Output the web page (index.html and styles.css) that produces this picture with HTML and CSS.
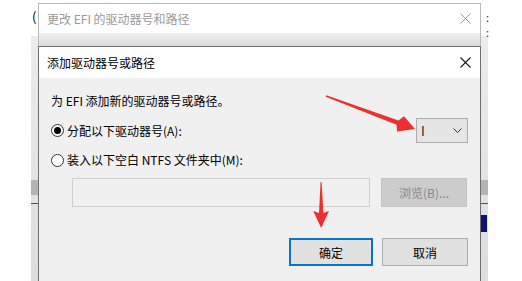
FILE: index.html
```html
<!DOCTYPE html>
<html lang="zh-CN">
<head>
    <meta charset="UTF-8">
    <title>添加驱动器号或路径</title>
    <link rel="stylesheet" href="styles.css">
</head>
<body>
    <div class="desk">
        <div class="backwin">
            <span class="shade"></span>
            <span class="rule"></span>
            <span class="navy"></span>
        </div>
        <span class="paren">(</span>
        <span class="dots dots-a">:</span>
        <span class="dots dots-b">:</span>

        <div class="dlg outer">
            <div class="titlebar">
                <span class="title">更改 EFI 的驱动器号和路径</span>
                <svg class="close" width="11" height="11" viewBox="0 0 11 11">
                    <path d="M0.5 0.5 L10.5 10.5 M10.5 0.5 L0.5 10.5" stroke="#9a9a9a" stroke-width="1" fill="none"/>
                </svg>
            </div>
            <div class="outer-body"></div>
        </div>

        <div class="dlg inner">
            <div class="titlebar">
                <span class="title">添加驱动器号或路径</span>
                <svg class="close" width="11" height="11" viewBox="0 0 11 11">
                    <path d="M0.5 0.5 L10.5 10.5 M10.5 0.5 L0.5 10.5" stroke="#1a1a1a" stroke-width="1.1" fill="none"/>
                </svg>
            </div>
            <div class="body">
                <p class="intro">为 EFI 添加新的驱动器号或路径。</p>

                <div class="row row-letter">
                    <label class="radio"><span class="dot checked"></span>分配以下驱动器号(A):</label>
                    <div class="combo">
                        <span>I</span>
                        <svg width="9" height="5" viewBox="0 0 9 5">
                            <path d="M0.5 0.5 L4.5 4.5 L8.5 0.5" stroke="#333" stroke-width="1" fill="none"/>
                        </svg>
                    </div>
                </div>

                <div class="row row-mount">
                    <label class="radio"><span class="dot"></span>装入以下空白 NTFS 文件夹中(M):</label>
                </div>

                <div class="row row-path">
                    <div class="pathbox"></div>
                    <button class="btn disabled" type="button">浏览(B)...</button>
                </div>

                <div class="row row-actions">
                    <button class="btn primary" type="button">确定</button>
                    <button class="btn" type="button">取消</button>
                </div>
            </div>
        </div>

        <svg class="marks" width="522" height="281" viewBox="0 0 522 281">
            <polygon fill="#ec2f2f" points="326.3,95.3 398.5,120.4 404,116.3 415,129 397,131.5 396.6,124.8 325.7,96.7"/>
            <polygon fill="#ec2f2f" points="320.6,182 321.6,182 323.4,213 329,211 321.2,228 313.2,211 319,213"/>
        </svg>
    </div>
</body>
</html>
```

FILE: styles.css
```css
* {
    box-sizing: border-box;
}
body {
    margin: 0;
    background: #fff;
    font-family: "Noto Sans CJK SC", "Noto Sans", sans-serif;
    font-size: 12px;
    color: #000;
}
.desk {
    position: relative;
    width: 522px;
    height: 281px;
    overflow: hidden;
    background: #fff;
}

/* window lying behind the dialogs */
.backwin {
    position: absolute;
    left: 31px;
    top: 36px;
    width: 457px;
    height: 260px;
    background: linear-gradient(#ececec, #dcdcdc);
}
.backwin .shade {
    position: absolute;
    left: 0;
    top: 144px;
    width: 100%;
    height: 15px;
    background: #b4b4b4;
}
.backwin .rule {
    position: absolute;
    left: 0;
    top: 167px;
    width: 100%;
    height: 1px;
    background: #555;
}
.backwin .navy {
    position: absolute;
    right: 1px;
    top: 179px;
    width: 6px;
    height: 17px;
    background: #101078;
}
.paren {
    position: absolute;
    left: 32px;
    top: 8px;
    font-size: 13px;
    line-height: 18px;
}
.dots {
    position: absolute;
    left: 486px;
    font-size: 11px;
    line-height: 11px;
    color: #333;
}
.dots-a { top: 12px; }
.dots-b { top: 27px; }

/* dialogs */
.dlg {
    position: absolute;
    left: 38px;
    width: 443px;
    background: #f0f0f0;
}
.titlebar {
    display: flex;
    align-items: center;
    justify-content: space-between;
    background: #fff;
    padding: 0 9px 0 8px;
}
.close {
    display: block;
}
.outer {
    top: 3px;
    height: 290px;
    border: 1px solid #b9b9b9;
}
.outer .titlebar {
    height: 29px;
}
.outer .title {
    color: #9a9a9a;
}
.outer-body {
    height: 14px;
    background: linear-gradient(#f0f0f0, #dadada);
}
.inner {
    top: 46px;
    height: 250px;
    border: 1px solid #6e6e6e;
}
.inner .titlebar {
    height: 31px;
}
.body {
    padding: 0 12px 0 8px;
}
.intro {
    margin: 14px 0 0 4px;
    height: 18px;
    line-height: 18px;
}
.row {
    display: flex;
    align-items: center;
}
.row-letter {
    margin-top: 8px;
    height: 25px;
    justify-content: space-between;
}
.row-mount {
    margin-top: 8px;
    height: 18px;
}
.radio {
    display: flex;
    align-items: center;
    line-height: 18px;
}
.dot {
    width: 13px;
    height: 13px;
    margin: 0 3px 0 4px;
    border: 1px solid #333;
    border-radius: 50%;
    background: #fff;
    display: flex;
    align-items: center;
    justify-content: center;
}
.dot.checked::after {
    content: "";
    width: 7px;
    height: 7px;
    border-radius: 50%;
    background: #000;
}
.combo {
    width: 52px;
    height: 25px;
    border: 1px solid #adadad;
    background: #e5e5e5;
    display: flex;
    align-items: center;
    justify-content: space-between;
    padding: 0 5px 0 4px;
}
.combo span {
    font-size: 13px;
    color: #222;
}
.row-path {
    margin-top: 9px;
    margin-left: 25px;
    height: 29px;
    gap: 11px;
}
.pathbox {
    width: 298px;
    height: 29px;
    border: 1px solid #cfcfcf;
    background: #f0f0f0;
}
.btn {
    width: 86px;
    height: 29px;
    border: 1px solid #adadad;
    background: #e1e1e1;
    font: inherit;
    color: #000;
    padding: 0;
}
.btn.disabled {
    background: #cccccc;
    border-color: #c4c4c4;
    color: #8a8a8a;
}
.row-actions {
    margin-top: 31px;
    justify-content: flex-end;
    gap: 9px;
}
.row-actions .btn {
    height: 28px;
}
.btn.primary {
    width: 84px;
    border: 2px solid #0a74c4;
}

.marks {
    position: absolute;
    left: 0;
    top: 0;
}
```
